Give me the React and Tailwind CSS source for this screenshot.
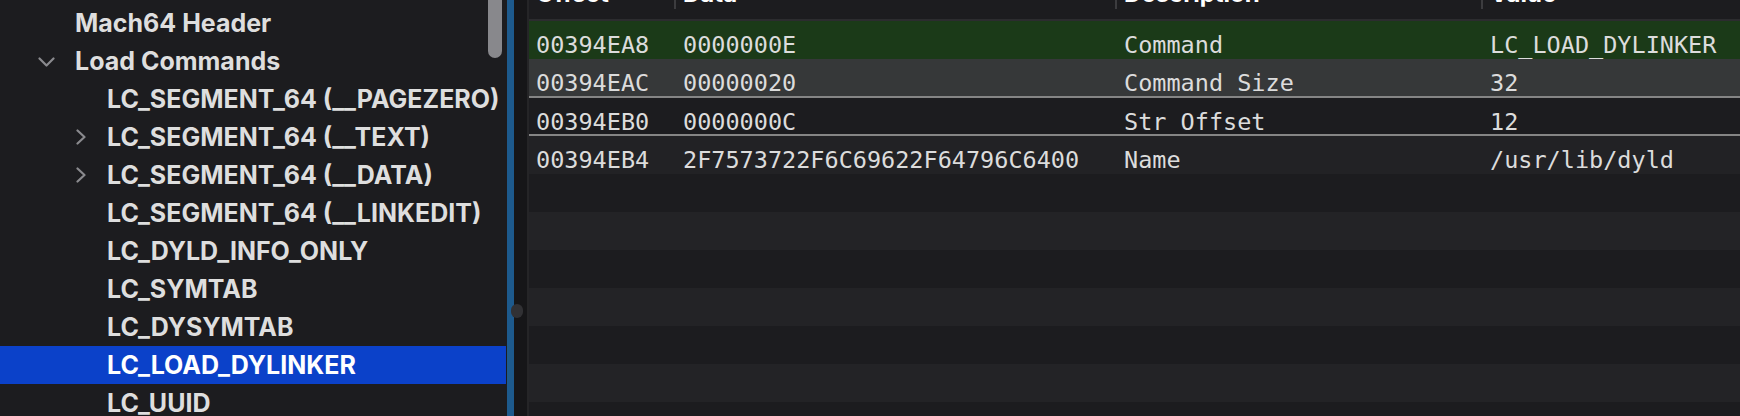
import React from "react";

const tree = [
  { label: "Mach64 Header", level: 0 },
  { label: "Load Commands", level: 0, chevron: "down" },
  { label: "LC_SEGMENT_64 (__PAGEZERO)", level: 1 },
  { label: "LC_SEGMENT_64 (__TEXT)", level: 1, chevron: "right" },
  { label: "LC_SEGMENT_64 (__DATA)", level: 1, chevron: "right" },
  { label: "LC_SEGMENT_64 (__LINKEDIT)", level: 1 },
  { label: "LC_DYLD_INFO_ONLY", level: 1 },
  { label: "LC_SYMTAB", level: 1 },
  { label: "LC_DYSYMTAB", level: 1 },
  { label: "LC_LOAD_DYLINKER", level: 1, selected: true },
  { label: "LC_UUID", level: 1 },
];

const rows = [
  { cells: ["00394EA8", "0000000E", "Command", "LC_LOAD_DYLINKER"], cls: "h-[38px] bg-[#1b3a18] text-[#d6ddd3]" },
  { cells: ["00394EAC", "00000020", "Command Size", "32"], cls: "h-[39px] bg-[#363839] border-b-2 border-[#858585]" },
  { cells: ["00394EB0", "0000000C", "Str Offset", "12"], cls: "h-[38px] bg-[#1c1c1f] border-b-2 border-[#858585]" },
  { cells: ["00394EB4", "2F7573722F6C69622F64796C6400", "Name", "/usr/lib/dyld"], cls: "h-[38px] bg-[#222225]" },
];

const mono = { fontFamily: '"DejaVu Sans Mono", "Liberation Mono", monospace' };
const sans = { fontFamily: 'Inter, "Liberation Sans", Arial, sans-serif' };

function ChevronDown() {
  return (
    <svg width="17" height="10" viewBox="0 0 17 10" className="ml-[8px] mt-[15px]">
      <path d="M1.5 1.5 L8.5 8.5 L15.5 1.5" fill="none" stroke="#8a8a8e" strokeWidth="2.2" strokeLinecap="round" strokeLinejoin="round" />
    </svg>
  );
}

function ChevronRight() {
  return (
    <svg width="11" height="16" viewBox="0 0 11 16" className="ml-[14px] mt-[11px]">
      <path d="M1.5 1.5 L8.5 8 L1.5 14.5" fill="none" stroke="#8a8a8e" strokeWidth="2.2" strokeLinecap="round" strokeLinejoin="round" />
    </svg>
  );
}

function TreeRow({ item }) {
  return (
    <div className={`flex h-[38px] shrink-0 items-start ${item.selected ? "bg-[#0b41c9] text-white" : "text-[#dedede]"}`}>
      <div className={`${item.level ? "w-[62px]" : "w-[30px]"} shrink-0`} />
      <div className="w-[45px] h-[38px] shrink-0 flex items-start">
        {item.chevron === "down" && <ChevronDown />}
        {item.chevron === "right" && <ChevronRight />}
      </div>
      <span className="pt-[5px] text-[25px] leading-[28px] font-bold whitespace-nowrap" style={sans}>{item.label}</span>
    </div>
  );
}

function Cell({ children, pad }) {
  return (
    <div className={`${pad} pt-[11px] text-[23.5px] leading-[27px] whitespace-nowrap overflow-hidden`} style={mono}>
      {children}
    </div>
  );
}

function HeaderCell({ label, sep }) {
  return (
    <div className="h-[19px] flex items-start overflow-hidden">
      {sep ? <div className="w-[2px] h-[9px] bg-[#3c3c3f] shrink-0" /> : null}
      <span className="ml-[7px] -mt-[20px] text-[24px] leading-[28px] font-bold text-white whitespace-nowrap" style={sans}>{label}</span>
    </div>
  );
}

export default function App() {
  const grid = "grid grid-cols-[145px_441px_366px_1fr]";
  return (
    <div className="relative w-[1740px] h-[416px] flex overflow-hidden bg-[#1c1c1f]">
      {/* outline tree */}
      <div className="relative w-[506px] shrink-0 flex flex-col pt-[4px] bg-[#1c1c1f]">
        {tree.map((item) => (
          <TreeRow key={item.label} item={item} />
        ))}
        <div className="absolute left-[488px] top-0 w-[14px] h-[58px] rounded-b-full bg-[#88888c]" />
      </div>
      <div className="w-px shrink-0 bg-[#1c1c1f]" />
      <div className="w-[7px] shrink-0 bg-[#1d5a8d]" />
      <div className="w-[13px] shrink-0 bg-[#161618]" />
      <div className="w-[2px] shrink-0 bg-[#252527]" />

      {/* fields table */}
      <div className="flex-1 flex flex-col">
        <div className={`${grid} h-[19px] shrink-0 bg-[#1c1c1f]`}>
          <HeaderCell label="Offset" />
          <HeaderCell label="Data" sep />
          <HeaderCell label="Description" sep />
          <HeaderCell label="Value" sep />
        </div>
        <div className="h-[2px] shrink-0 bg-[#2c2c2f]" />
        {rows.map((r) => (
          <div key={r.cells[0]} className={`${grid} shrink-0 text-[#dcdcdc] ${r.cls}`}>
            <Cell pad="pl-[7px]">{r.cells[0]}</Cell>
            <Cell pad="pl-[9px]">{r.cells[1]}</Cell>
            <Cell pad="pl-[9px]">{r.cells[2]}</Cell>
            <Cell pad="pl-[9px]">{r.cells[3]}</Cell>
          </div>
        ))}
        {[0, 1, 2, 3, 4, 5, 6].map((i) => (
          <div key={i} className={`h-[38px] shrink-0 ${i % 2 ? "bg-[#232326]" : "bg-[#1c1c1f]"}`} />
        ))}
      </div>

      {/* split view handle */}
      <div className="absolute left-[511px] top-[304px] w-[12px] h-[14px] rounded-full bg-[#313134]" />
    </div>
  );
}
